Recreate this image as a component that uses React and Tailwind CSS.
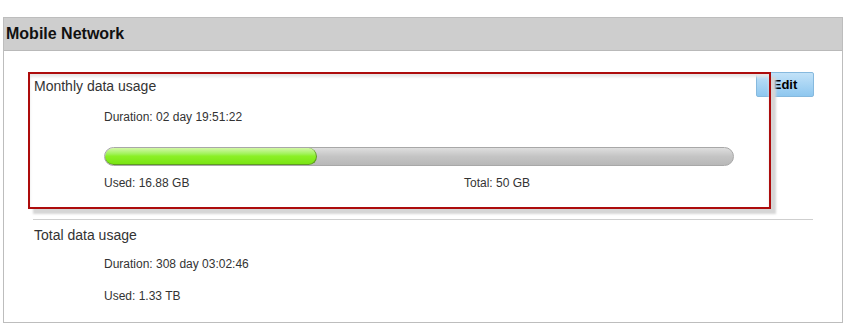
import React from "react";

const usage = { used: 16.88, total: 50 };

const App = () => {
  const pct = (usage.used / usage.total) * 100;

  return (
    <div className="w-[850px] h-[329px] bg-white pt-[17px] pl-[3px] font-['Liberation_Sans',Arial,sans-serif] text-[#333]">
      <div className="w-[840px] h-[306px] border border-[#bdbdbd]">
        {/* header */}
        <div className="h-[33px] flex items-center pl-[2px] bg-[#cecece] border-b border-[#b9b9b9]">
          <h2 className="text-[16px] leading-[20px] font-bold text-[#111]">
            Mobile Network
          </h2>
        </div>

        <div className="pl-[24px] pt-[21px]">
          {/* monthly */}
          <div className="flex items-start">
            <div className="relative z-10 w-[743px] border-2 border-[#ad0c0c] shadow-[5px_5px_2px_#d6d6d6,inset_0_3px_3px_#e6e6e6] pl-[4px] pt-[4px] pb-[17px]">
              <p className="text-[14px] leading-[16px]">Monthly data usage</p>
              <div className="pl-[70px]">
                <p className="mt-[16px] text-[12px] leading-[14px]">
                  Duration: 02 day 19:51:22
                </p>
                <div className="mt-[23px] w-[630px] h-[19px] rounded-full border border-[#a8a8a8] bg-gradient-to-b from-[#dedede] via-[#c4c4c4] to-[#b8b8b8] overflow-hidden">
                  <div
                    className="h-full rounded-full border-r border-b border-[#5e9b22] bg-gradient-to-b from-[#d3f7a6] via-[#8cf026] to-[#7ae412]"
                    style={{ width: `${pct}%` }}
                  />
                </div>
                <div className="mt-[10px] flex text-[12px] leading-[14px]">
                  <p className="w-[360px]">Used: 16.88 GB</p>
                  <p>Total: 50 GB</p>
                </div>
              </div>
            </div>
            <button className="-ml-[15px] w-[58px] h-[25px] rounded-[2px] border border-[#86b9de] bg-gradient-to-b from-[#c2e2f8] to-[#8ec7ef] text-[13px] font-bold text-black">
              Edit
            </button>
          </div>

          <div className="mt-[10px] ml-[5px] w-[780px] border-t border-[#cfcfcf]" />

          {/* total */}
          <div className="pl-[6px] pt-[7px]">
            <p className="text-[14px] leading-[16px]">Total data usage</p>
            <div className="pl-[70px] text-[12px] leading-[14px]">
              <p className="mt-[14px]">Duration: 308 day 03:02:46</p>
              <p className="mt-[18px]">Used: 1.33 TB</p>
            </div>
          </div>
        </div>
      </div>
    </div>
  );
};

export default App;
